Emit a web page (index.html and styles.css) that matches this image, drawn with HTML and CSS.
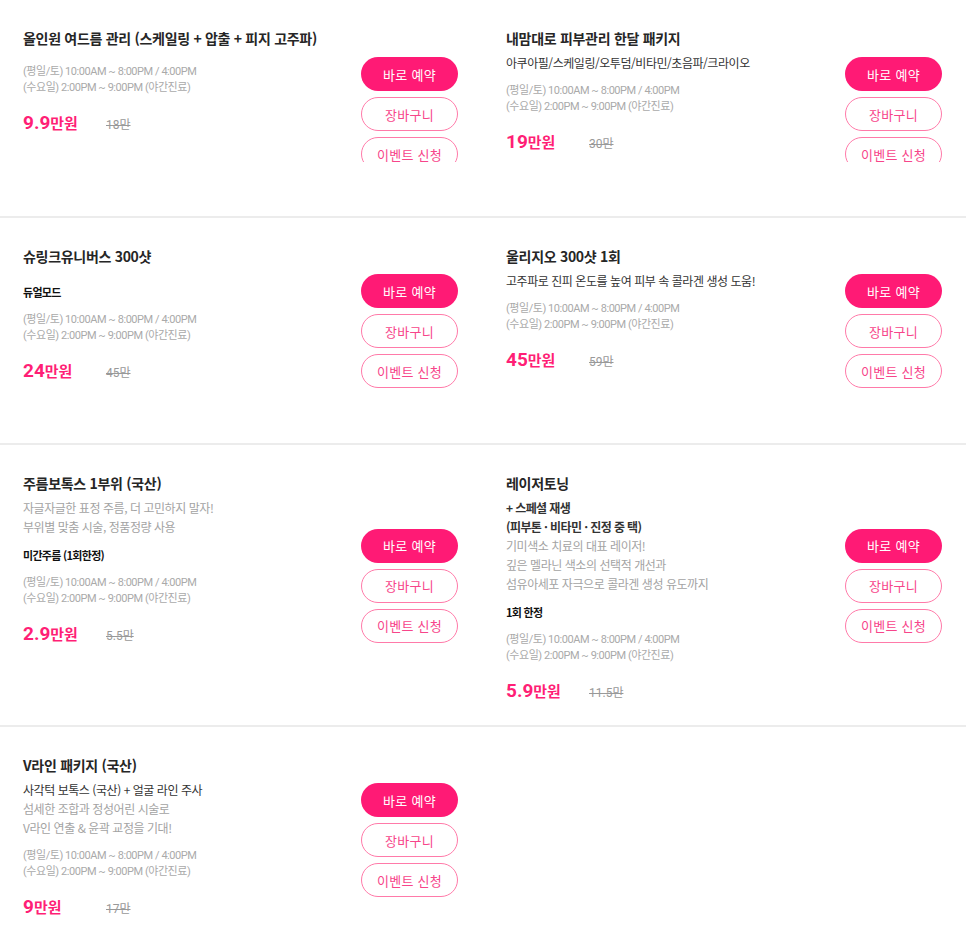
FILE: index.html
```html
<!DOCTYPE html>
<html lang="ko">
<head>
<meta charset="utf-8">
<title>이벤트 목록</title>
<link rel="stylesheet" href="styles.css">
</head>
<body>
<div class="list">
  <div class="row">
    <div class="cell">
      <div class="info">
        <h3 class="title">올인원 여드름 관리 (스케일링 + 압출 + 피지 고주파)</h3>
        <div class="sched first"><p>(평일/토) 10:00AM ~ 8:00PM / 4:00PM</p><p>(수요일) 2:00PM ~ 9:00PM (야간진료)</p></div>
        <div class="price"><span class="sale"><b>9.9</b>만원</span><s class="orig">18만</s></div>
      </div>
      <div class="btns clip">
        <a class="btn fill">바로 예약</a><a class="btn line">장바구니</a><a class="btn line">이벤트 신청</a>
      </div>
    </div>
    <div class="cell">
      <div class="info">
        <h3 class="title">내맘대로 피부관리 한달 패키지</h3>
        <div class="desc"><p class="dark">아쿠아필/스케일링/오투덤/비타민/초음파/크라이오</p></div>
        <div class="sched"><p>(평일/토) 10:00AM ~ 8:00PM / 4:00PM</p><p>(수요일) 2:00PM ~ 9:00PM (야간진료)</p></div>
        <div class="price"><span class="sale"><b>19</b>만원</span><s class="orig">30만</s></div>
      </div>
      <div class="btns clip">
        <a class="btn fill">바로 예약</a><a class="btn line">장바구니</a><a class="btn line">이벤트 신청</a>
      </div>
    </div>
  </div>

  <div class="row">
    <div class="cell">
      <div class="info">
        <h3 class="title">슈링크유니버스 300샷</h3>
        <p class="note first">듀얼모드</p>
        <div class="sched"><p>(평일/토) 10:00AM ~ 8:00PM / 4:00PM</p><p>(수요일) 2:00PM ~ 9:00PM (야간진료)</p></div>
        <div class="price"><span class="sale"><b>24</b>만원</span><s class="orig">45만</s></div>
      </div>
      <div class="btns">
        <a class="btn fill">바로 예약</a><a class="btn line">장바구니</a><a class="btn line">이벤트 신청</a>
      </div>
    </div>
    <div class="cell">
      <div class="info">
        <h3 class="title">울리지오 300샷 1회</h3>
        <div class="desc"><p class="dark">고주파로 진피 온도를 높여 피부 속 콜라겐 생성 도움!</p></div>
        <div class="sched"><p>(평일/토) 10:00AM ~ 8:00PM / 4:00PM</p><p>(수요일) 2:00PM ~ 9:00PM (야간진료)</p></div>
        <div class="price"><span class="sale"><b>45</b>만원</span><s class="orig">59만</s></div>
      </div>
      <div class="btns">
        <a class="btn fill">바로 예약</a><a class="btn line">장바구니</a><a class="btn line">이벤트 신청</a>
      </div>
    </div>
  </div>

  <div class="row">
    <div class="cell">
      <div class="info">
        <h3 class="title">주름보톡스 1부위 (국산)</h3>
        <div class="desc"><p>자글자글한 표정 주름, 더 고민하지 말자!</p><p>부위별 맞춤 시술, 정품정량 사용</p></div>
        <p class="note">미간주름 (1회한정)</p>
        <div class="sched"><p>(평일/토) 10:00AM ~ 8:00PM / 4:00PM</p><p>(수요일) 2:00PM ~ 9:00PM (야간진료)</p></div>
        <div class="price"><span class="sale"><b>2.9</b>만원</span><s class="orig">5.5만</s></div>
      </div>
      <div class="btns">
        <a class="btn fill">바로 예약</a><a class="btn line">장바구니</a><a class="btn line">이벤트 신청</a>
      </div>
    </div>
    <div class="cell">
      <div class="info">
        <h3 class="title">레이저토닝</h3>
        <div class="desc"><p class="dark strong">+ 스페셜 재생</p><p class="dark strong">(피부톤 · 비타민 · 진정 중 택)</p><p>기미색소 치료의 대표 레이저!</p><p>깊은 멜라닌 색소의 선택적 개선과</p><p>섬유아세포 자극으로 콜라겐 생성 유도까지</p></div>
        <p class="note">1회 한정</p>
        <div class="sched"><p>(평일/토) 10:00AM ~ 8:00PM / 4:00PM</p><p>(수요일) 2:00PM ~ 9:00PM (야간진료)</p></div>
        <div class="price"><span class="sale"><b>5.9</b>만원</span><s class="orig">11.5만</s></div>
      </div>
      <div class="btns">
        <a class="btn fill">바로 예약</a><a class="btn line">장바구니</a><a class="btn line">이벤트 신청</a>
      </div>
    </div>
  </div>

  <div class="row">
    <div class="cell">
      <div class="info">
        <h3 class="title">V라인 패키지 (국산)</h3>
        <div class="desc"><p class="dark">사각턱 보톡스 (국산) + 얼굴 라인 주사</p><p>섬세한 조합과 정성어린 시술로</p><p>V라인 연출 &amp; 윤곽 교정을 기대!</p></div>
        <div class="sched"><p>(평일/토) 10:00AM ~ 8:00PM / 4:00PM</p><p>(수요일) 2:00PM ~ 9:00PM (야간진료)</p></div>
        <div class="price"><span class="sale"><b>9</b>만원</span><s class="orig">17만</s></div>
      </div>
      <div class="btns">
        <a class="btn fill">바로 예약</a><a class="btn line">장바구니</a><a class="btn line">이벤트 신청</a>
      </div>
    </div>
    <div class="cell empty"></div>
  </div>
</div>
</body>
</html>
```

FILE: styles.css
```css
html, body {
  margin: 0;
  padding: 0;
  background: #fff;
}
body {
  font-family: "Noto Sans CJK KR", "Noto Sans", sans-serif;
  color: #222;
}
p, h3 {
  margin: 0;
}
.list {
  width: 966px;
}
.row {
  display: grid;
  grid-template-columns: 483px 483px;
  border-bottom: 2px solid #ececec;
}
.cell {
  display: flex;
  align-items: center;
  padding: 0 25px 0 23px;
}
.row .cell:nth-child(2) {
  padding-right: 24px;
}
.info {
  flex: 1;
  align-self: flex-start;
  padding: 28px 0 22px;
}
.title {
  font-size: 14px;
  font-weight: 700;
  line-height: 21px;
  color: #262626;
  letter-spacing: -0.3px;
}
.desc {
  margin-top: 4px;
}
.desc p {
  font-size: 12px;
  line-height: 19px;
  color: #a3a3a3;
  letter-spacing: -0.45px;
}
.desc p.dark {
  color: #333;
}
.desc p.strong {
  font-weight: 700;
  letter-spacing: -0.6px;
}
.note {
  margin-top: 10px;
  font-size: 11px;
  line-height: 18px;
  font-weight: 700;
  color: #111;
  letter-spacing: -0.7px;
}
.note.first {
  margin-top: 16px;
}
.sched {
  margin-top: 11px;
}
.sched.first {
  margin-top: 15px;
}
.sched p {
  font-family: "Roboto", "Noto Sans CJK KR", sans-serif;
  font-size: 11px;
  line-height: 15.5px;
  color: #aaa;
  letter-spacing: -0.45px;
}
.price {
  margin-top: 16px;
  height: 24px;
  line-height: 24px;
  display: flex;
  align-items: baseline;
}
.sale {
  width: 83px;
  color: #ff1f76;
  font-size: 15px;
  font-weight: 700;
  line-height: 24px;
}
.sale b {
  font-family: "Roboto", sans-serif;
  font-size: 19px;
  font-weight: 700;
  line-height: 24px;
}
.orig {
  font-family: "Roboto", "Noto Sans CJK KR", sans-serif;
  font-size: 12px;
  line-height: 24px;
  color: #999;
  text-decoration: line-through;
}
.btns {
  width: 97px;
  flex: none;
  margin: 56px 0 55px;
  display: flex;
  flex-direction: column;
  gap: 6px;
}
.btns.clip {
  height: 105px;
  margin: 57px 0 54px;
  overflow: hidden;
}
.btn {
  flex: none;
  height: 34px;
  box-sizing: border-box;
  border-radius: 17px;
  display: flex;
  align-items: center;
  justify-content: center;
  font-size: 13px;
  letter-spacing: 0.3px;
  cursor: pointer;
}
.btn.fill {
  background: #ff1a75;
  color: #fff;
}
.btn.line {
  border: 1px solid #ff7aa9;
  color: #f7458a;
  background: #fff;
}
```
